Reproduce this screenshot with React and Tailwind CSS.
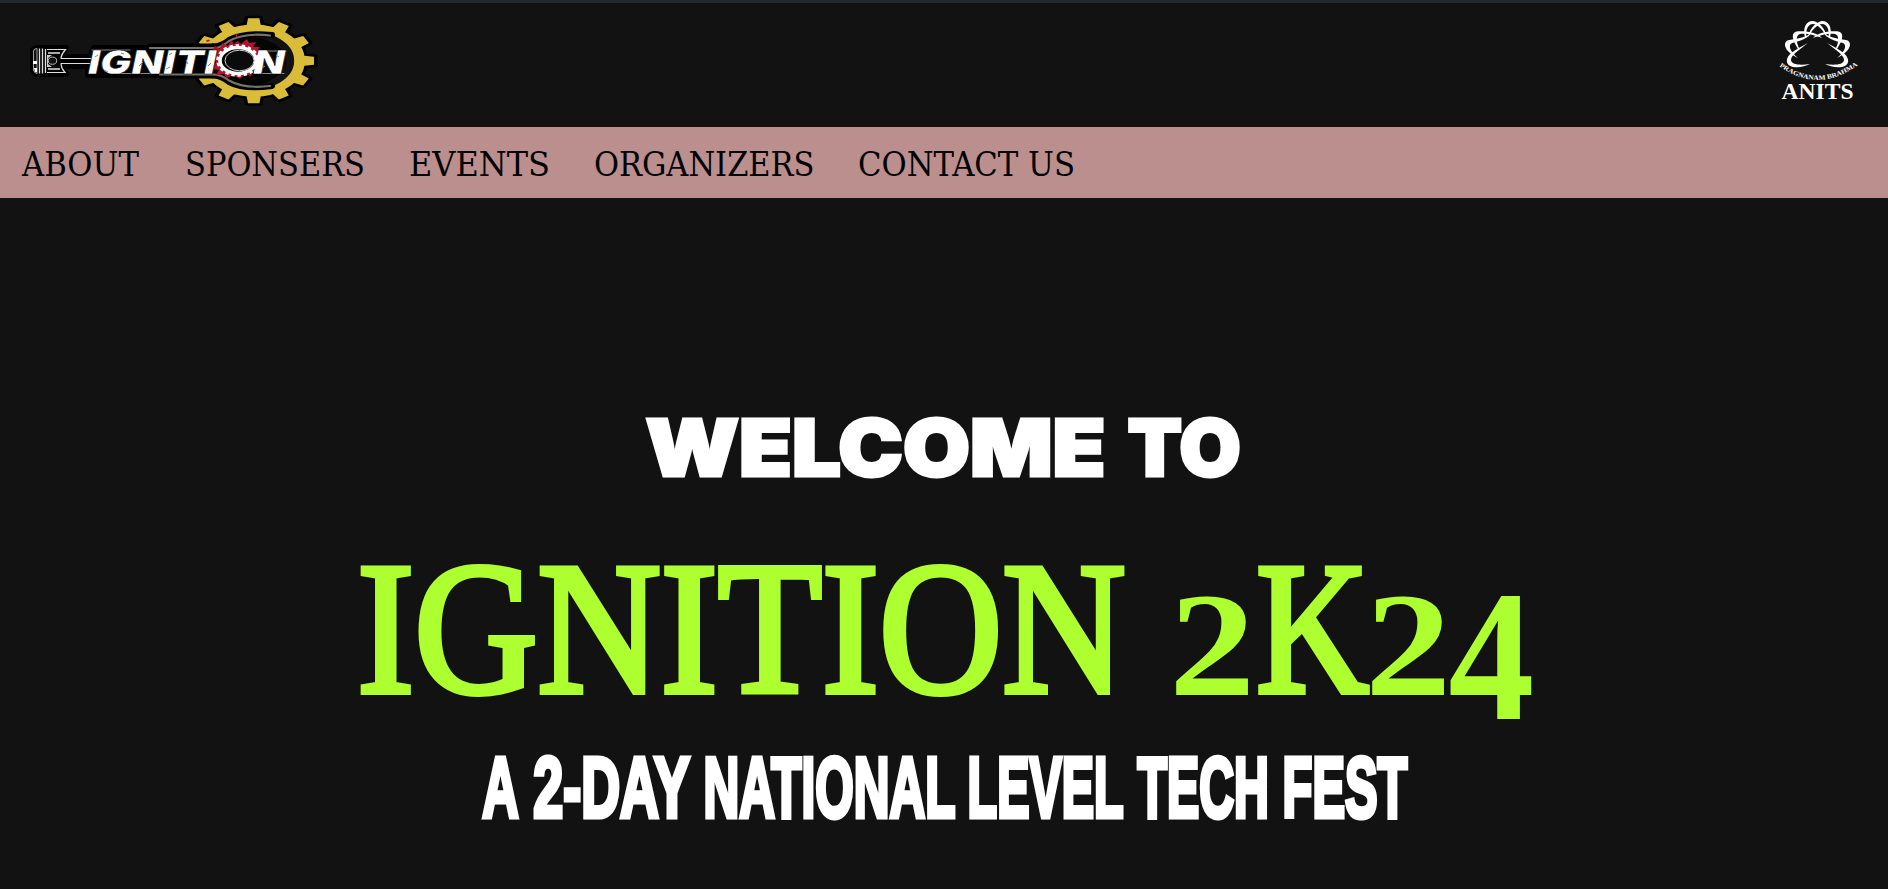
import { useLayoutEffect, useRef, useState } from "react";

// Stretches a word horizontally so that its ink fills the given width.
function FitWord({ text, width, stroke = 0, className = "", boxClass = "" }) {
  const ref = useRef(null);
  const [fit, setFit] = useState({ scale: 1, left: 0 });
  useLayoutEffect(() => {
    const cs = getComputedStyle(ref.current);
    const ctx = document.createElement("canvas").getContext("2d");
    ctx.font = `${cs.fontWeight} ${cs.fontSize} ${cs.fontFamily}`;
    const m = ctx.measureText(text);
    const left = m.actualBoundingBoxLeft + stroke / 2;
    const ink = m.actualBoundingBoxRight + m.actualBoundingBoxLeft + stroke;
    setFit({ scale: width / ink, left: (left * width) / ink });
  }, [text, width, stroke]);
  return (
    <span className={`block shrink-0 box-content ${boxClass}`} style={{ width }}>
      <span
        ref={ref}
        className={`block w-max origin-left whitespace-nowrap ${className}`}
        style={{ transform: `translateX(${fit.left}px) scaleX(${fit.scale})` }}
      >
        {text}
      </span>
    </span>
  );
}

const NAV = [
  { text: "ABOUT", width: 118.5 },
  { text: "SPONSERS", width: 176 },
  { text: "EVENTS", width: 138 },
  { text: "ORGANIZERS", width: 217.5 },
  { text: "CONTACT US", width: 214 },
];

const TAGLINE = [
  { text: "A", width: 37 },
  { text: "2-DAY", width: 157.5 },
  { text: "NATIONAL", width: 250.5 },
  { text: "LEVEL", width: 154.5 },
  { text: "TECH", width: 131.5, box: "-ml-[2px]" },
  { text: "FEST", width: 124.5, box: "ml-[3px]" },
];

const TEETH = Array.from({ length: 12 }, (_, i) => i * 30).filter((a) => a !== 180);
const RING = "M-27.500 -17A32.300 32.300 0 1 1 -27.500 17";

function IgnitionLogo() {
  const letters = "fill-white font-['Inter',sans-serif] text-[33px] font-black italic";
  return (
    <svg width="310" height="110" viewBox="20 3 310 110" className="block">
      {/* black outline behind every part */}
      <g stroke="#000" fill="#000" strokeLinejoin="round">
        <g strokeWidth="6">
          <path d="M33 50L37 48H66L63 54V57H90L94 48H205V75H88V66H63V69L66 74H36L33 70Z" />
        </g>
        <g transform="translate(253.700 60.700) scale(1.420 1)">
          <path d={RING} strokeWidth="12" />
          {TEETH.map((a) => (
            <path key={a} transform={`rotate(${a})`} d="M33 -5.200L42.500 -4V4L33 5.200Z" strokeWidth="5" />
          ))}
        </g>
      </g>
      <ellipse cx="253.700" cy="60.700" rx="44" ry="31" fill="#121212" />
      <ellipse cx="244" cy="61" rx="42" ry="25" fill="#050505" />
      {/* gear */}
      <g transform="translate(253.700 60.700) scale(1.420 1)">
        <path d={RING} fill="none" stroke="#dabc3b" strokeWidth="7.500" />
        {TEETH.map((a) => (
          <path key={a} transform={`rotate(${a})`} d="M34 -5.200L42.500 -4V4L34 5.200Z" fill="#dabc3b" />
        ))}
      </g>
      {/* connecting rod */}
      <g fill="none" strokeLinecap="round">
        <path d="M150 46.500H214Q222 46 229 40Q244 32 272 35M160 75.500H214Q222 76 229 82Q244 90 272 86" stroke="#000" strokeWidth="6" />
        <path d="M150 48H216Q222 47 229 41Q244 32.500 270 35.500M160 74.500H214Q222 75 229 80.500Q244 89 270 86" stroke="#77736c" strokeWidth="2.200" />
        <path d="M61 58.500H94M61 63.500H92" stroke="#ddd" strokeWidth="1" />
        <path d="M92 50H130M112 73.500H150M262 51H286M262 73.500H284" stroke="#aaa" strokeWidth="0.800" />
      </g>
      {/* piston */}
      <path d="M33.500 51Q34 48.500 37 48.500V73.500Q34 73 33.500 70Z" fill="#111" stroke="#ccc" strokeWidth="0.800" />
      <path d="M33 61H37V64H33ZM34 68H37V72H35Z" fill="#fff" />
      <path d="M39.500 48.500V73.500M42.500 48.500V73.500M45.500 49V73" stroke="#ddd" strokeWidth="1.300" />
      <path d="M47 49.500H65.500Q61.500 54 61 58M61 64Q61.500 69 65 72.500H47" fill="none" stroke="#ddd" strokeWidth="1.200" />
      <path d="M48 53H60M48 69H60" stroke="#aaa" strokeWidth="2.200" />
      <path d="M47 55H52L48 58V64L52 67H47Z" fill="#ccc" />
      <ellipse cx="52.500" cy="60.700" rx="4.200" ry="3.600" fill="#111" stroke="#bbb" strokeWidth="1" />
      {/* red splatter */}
      <path d="M211 52L215 46L220 49L222 43L228 46L231 40L234 44L238 41L241 44L247 39L249 43L256 42L253 47L260 47L257 52L262 57L257 63L260 68L254 70L251 76L245 74L240 79L233 75L227 78L224 74L216 75L219 70L212 69L216 62L211 57Z" fill="#b5122b" />
      <path d="M206 40.500L209 39.500L210 41L207 42ZM235.500 34L237 33.500V37H236Z" fill="#b5122b" />
      {/* lettering */}
      <g stroke="#000" strokeWidth="0.500">
        <text x="88" y="73.500" textLength="128" lengthAdjust="spacingAndGlyphs" className={letters}>IGNITI</text>
        <text x="253" y="73.500" textLength="32" lengthAdjust="spacingAndGlyphs" className={letters}>N</text>
      </g>
      <path d="M95 57L98 55M104 70L108 72M121 53L124 54M139 66L143 62M169 55L172 53M166 69L170 67M186 60L188 64M208 66L211 63M262 68L265 66M276 55L279 57" stroke="#888" strokeWidth="1" />
      {/* pinion */}
      <ellipse cx="238" cy="60.500" rx="18" ry="13" fill="#000" stroke="#fff" strokeWidth="3.500" />
      <ellipse cx="238" cy="60.500" rx="20" ry="14.500" fill="none" stroke="#fff" strokeWidth="3.500" strokeDasharray="3.300 2.770" />
      <ellipse cx="239.500" cy="60.500" rx="14.500" ry="10.300" fill="#0b0b0b" stroke="#ccc" strokeWidth="1" />
    </svg>
  );
}

function Petals() {
  return (
    <>
      <path d="M45 38C42 25 48 20.500 53 21C59 22 65 28 67 37C62 29 57 24 53 24C48 24.500 45.500 29 46.500 37Z" />
      <path d="M38 49C31 38 31 32 38 31.300C47 30.500 58 33 62 38C53 34 44 33 40 34C35.500 35.500 36 42 39.500 49Z" />
      <path d="M38 58C25 52 22 43 28 40.300C35 38.500 45 38.500 51 33C47 40 37 41.500 32 43C27.500 45.500 30.500 52 38 58Z" />
      <path d="M50 64C42 68.500 27 69 26.800 61C27 54 35 50 48 43C39 50 31 55 31 60C31.500 65.500 42 65 50 64Z" />
    </>
  );
}

function AnitsLogo() {
  return (
    <svg width="128" height="110" viewBox="0 3 128 110" className="block fill-white">
      <Petals />
      <g transform="translate(115 0) scale(-1 1)">
        <Petals />
      </g>
      <path id="motto" d="M18.500 65.500Q57.500 94.500 98 65" fill="none" />
      <text className="font-['Liberation_Serif',serif] text-[6.5px] font-bold">
        <textPath href="#motto" textLength="85" lengthAdjust="spacingAndGlyphs" startOffset="1">PRAGNANAM BRAHMA</textPath>
      </text>
      <text x="21.500" y="99" textLength="72" lengthAdjust="spacingAndGlyphs" className="font-['Liberation_Serif',serif] text-[24px] font-bold">
        ANITS
      </text>
    </svg>
  );
}

export default function App() {
  const welcome = "font-['Inter',sans-serif] text-[78px] font-black [-webkit-text-stroke:3px_white]";
  const title = "font-['Liberation_Serif',serif] text-[188px] [-webkit-text-stroke:6px_#adff2f]";
  const digit = "font-['Liberation_Serif',serif] text-[149px] font-bold";
  return (
    <div className="flex h-[889px] flex-col overflow-hidden bg-[#121212]">
      <div className="h-[3px] shrink-0 bg-[#222a30]" />
      <header className="flex h-[124px] shrink-0 items-start justify-between pl-5">
        <IgnitionLogo />
        <AnitsLogo />
      </header>
      <nav className="flex h-[71px] shrink-0 items-center gap-[47px] bg-[#bc8f8f] pt-[3px] pl-[21px]">
        {NAV.map((item) => (
          <a key={item.text} href="#" className="block text-black">
            <FitWord text={item.text} width={item.width} className="font-['DejaVu_Serif_Condensed','DejaVu_Serif',serif] text-[34px] leading-[40px]" />
          </a>
        ))}
      </nav>
      <main className="flex flex-col items-center pt-[200px]">
        <h1 className="flex gap-[24px] pr-[3px] leading-[100px] text-white">
          <FitWord text="WELCOME" width={459} stroke={3} className={welcome} />
          <FitWord text="TO" width={112} stroke={3} className={welcome} />
        </h1>
        <h2 className="mt-[31px] flex h-[200px] gap-[51px] pl-[4px] leading-[200px] text-[#adff2f]">
          <FitWord text="IGNITION" width={765} stroke={6} className={title} />
          <span className="flex">
            <FitWord text="2" width={73} className={digit} boxClass="pt-[16px]" />
            <FitWord text="K" width={112} stroke={6} className={title} boxClass="ml-[9px]" />
            <FitWord text="2" width={73} className={digit} boxClass="ml-[2px] pt-[16px]" />
            <FitWord text="4" width={82} className="font-['Liberation_Serif',serif] text-[187px] font-bold" boxClass="ml-[5px] pt-[27px]" />
          </span>
        </h2>
        <h3 className="mt-[8px] flex gap-[14px] pl-[3px] leading-[100px] text-white">
          {TAGLINE.map((w) => (
            <FitWord
              key={w.text}
              text={w.text}
              width={w.width}
              stroke={5}
              boxClass={w.box}
              className="font-['Liberation_Sans_Narrow','Liberation_Sans',sans-serif] text-[86px] font-bold [-webkit-text-stroke:5px_white]"
            />
          ))}
        </h3>
      </main>
    </div>
  );
}
